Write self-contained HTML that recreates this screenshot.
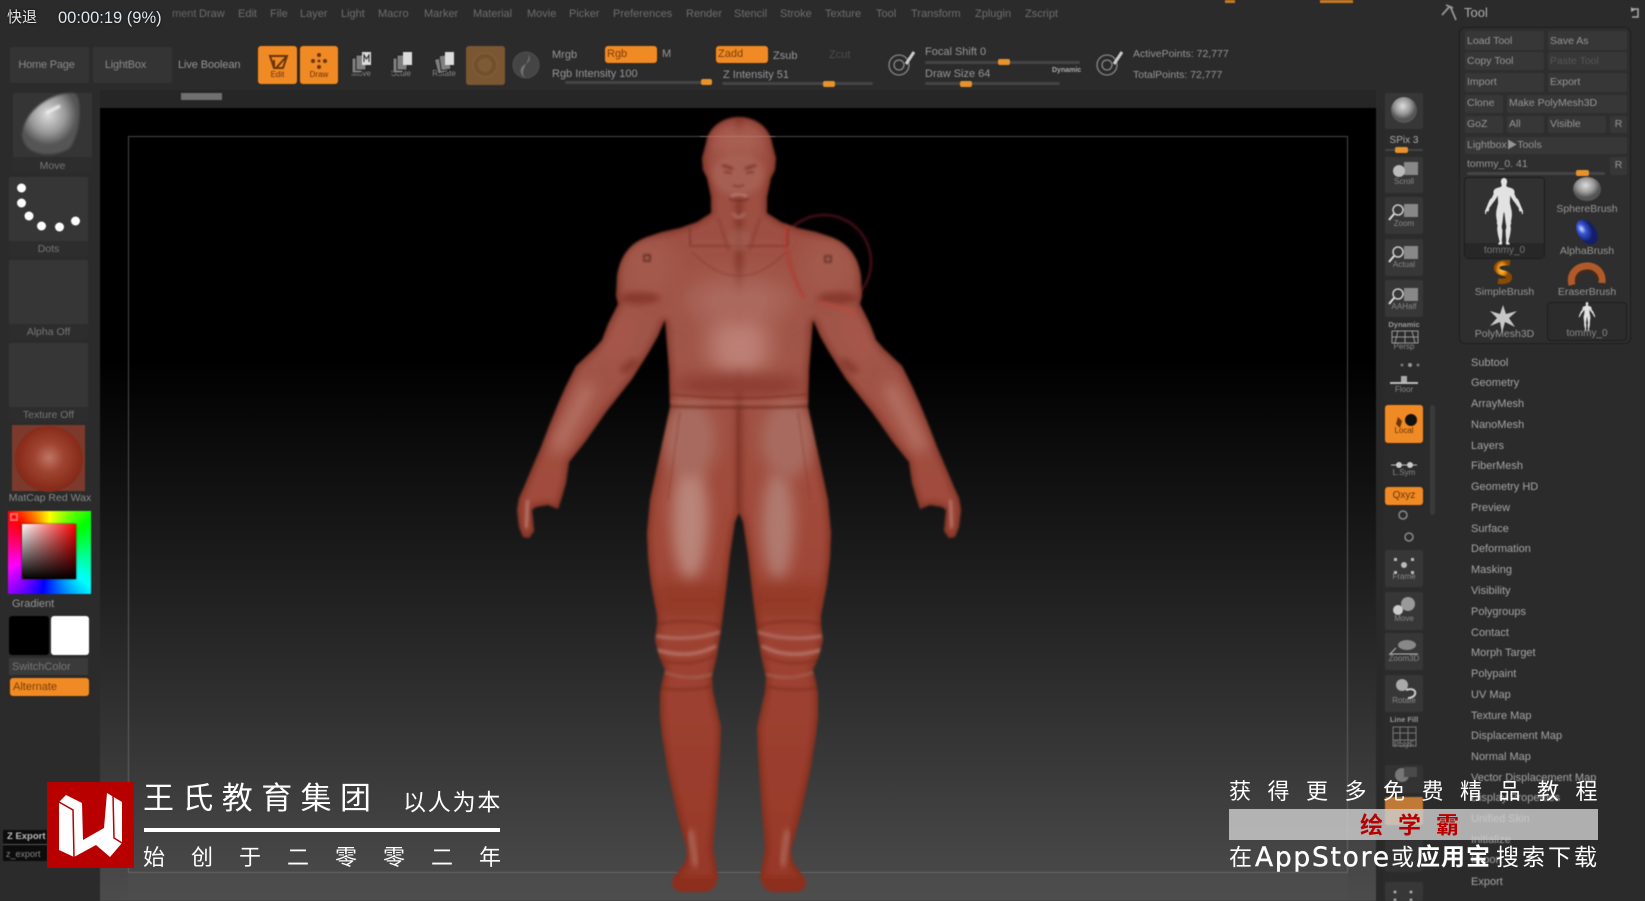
<!DOCTYPE html>
<html lang="zh"><head><meta charset="utf-8"><title>ZBrush</title>
<style>
html,body{margin:0;padding:0;background:#2a2a2a;width:1645px;height:901px;overflow:hidden}
body{position:relative;font-family:"Liberation Sans","Noto Sans CJK SC",sans-serif}
#app{position:absolute;left:0;top:0;width:1645px;height:901px;background:#2b2b2b;filter:blur(.65px);overflow:hidden}
.b{position:absolute;background:#373737;border-radius:2px}
.o{position:absolute;background:#f08a24;border-radius:3px;box-shadow:0 0 2px #4a2a0a}
.t{position:absolute;white-space:nowrap;font-size:11px;line-height:14px;height:14px;margin-top:-7px;color:#969696}
.c{text-align:center}
.s{position:absolute;height:3px;background:#444;border-radius:2px}
.h{position:absolute;height:6px;background:#e8922c;border-radius:2px}
.x{position:absolute;white-space:nowrap;line-height:1;color:#fff}
</style></head><body>
<div id="app">
<!-- canvas -->
<div style="position:absolute;left:100px;top:90px;width:1276px;height:18px;background:#262626"></div>
<div style="position:absolute;left:100px;top:108px;width:1276px;height:793px;background:linear-gradient(#000 0,#000 250px,#131313 390px,#4c4c4c 793px)"></div>
<div style="position:absolute;left:1376px;top:108px;width:8px;height:793px;background:#292929"></div>
<div style="position:absolute;left:128px;top:136px;width:1220px;height:737px;border:1px solid rgba(130,130,130,.55);box-sizing:border-box"></div>
<div style="position:absolute;left:128px;top:874px;width:1220px;height:27px;background:rgba(80,80,80,.45)"></div>
<div style="position:absolute;left:181px;top:93px;width:41px;height:7px;background:#707070"></div>

<!-- menu -->
<span class="t" style="left:172px;top:14px;color:#666">ment</span>
<span class="t" style="left:199px;top:14px;color:#6e6e6e">Draw</span><span class="t" style="left:238px;top:14px;color:#6e6e6e">Edit</span><span class="t" style="left:270px;top:14px;color:#6e6e6e">File</span><span class="t" style="left:300px;top:14px;color:#6e6e6e">Layer</span><span class="t" style="left:341px;top:14px;color:#6e6e6e">Light</span><span class="t" style="left:378px;top:14px;color:#6e6e6e">Macro</span><span class="t" style="left:424px;top:14px;color:#6e6e6e">Marker</span><span class="t" style="left:473px;top:14px;color:#6e6e6e">Material</span><span class="t" style="left:527px;top:14px;color:#6e6e6e">Movie</span><span class="t" style="left:569px;top:14px;color:#6e6e6e">Picker</span><span class="t" style="left:613px;top:14px;color:#6e6e6e">Preferences</span><span class="t" style="left:686px;top:14px;color:#6e6e6e">Render</span><span class="t" style="left:734px;top:14px;color:#6e6e6e">Stencil</span><span class="t" style="left:780px;top:14px;color:#6e6e6e">Stroke</span><span class="t" style="left:825px;top:14px;color:#6e6e6e">Texture</span><span class="t" style="left:876px;top:14px;color:#6e6e6e">Tool</span><span class="t" style="left:911px;top:14px;color:#6e6e6e">Transform</span><span class="t" style="left:975px;top:14px;color:#6e6e6e">Zplugin</span><span class="t" style="left:1025px;top:14px;color:#6e6e6e">Zscript</span>
<div style="position:absolute;left:1225px;top:0;width:10px;height:3px;background:#c97a20"></div>
<div style="position:absolute;left:1320px;top:0;width:33px;height:3px;background:#c97a20"></div>

<!-- toolbar -->
<div class="b" style="left:10px;top:47px;width:79px;height:36px;background:#343434"></div><span class="t c" style="left:7px;top:65px;width:79px;letter-spacing:-.2px;color:#8a8a8a">Home Page</span>
<div class="b" style="left:93px;top:47px;width:79px;height:36px;background:#343434"></div><span class="t c" style="left:86px;top:65px;width:79px;letter-spacing:-.2px;color:#8a8a8a">LightBox</span>
<span class="t" style="left:178px;top:65px;letter-spacing:-.1px">Live Boolean</span>
<div class="o" style="left:258px;top:46px;width:39px;height:38px"></div><span class="t c" style="left:258px;top:75px;width:39px;font-size:8px;color:#6a3508">Edit</span>
<div class="o" style="left:300px;top:46px;width:38px;height:38px"></div><span class="t c" style="left:300px;top:75px;width:38px;font-size:8px;color:#6a3508">Draw</span>
<span class="t c" style="left:348px;top:74px;width:26px;font-size:8px;color:#888">Move</span>
<span class="t c" style="left:388px;top:74px;width:26px;font-size:8px;color:#888">Scale</span>
<span class="t c" style="left:430px;top:74px;width:28px;font-size:8px;color:#888">Rotate</span>
<div style="position:absolute;left:466px;top:46px;width:39px;height:39px;background:#7a5632;border-radius:3px"></div>
<span class="t" style="left:552px;top:55px">Mrgb</span>
<div class="o" style="left:605px;top:46px;width:52px;height:17px"></div><span class="t" style="left:607px;top:54px;color:#7a3f08">Rgb</span>
<span class="t" style="left:662px;top:54px">M</span>
<span class="t" style="left:552px;top:74px">Rgb Intensity 100</span>
<div class="s" style="left:565px;top:81px;width:147px"></div><div class="h" style="left:701px;top:79px;width:11px"></div>
<div class="o" style="left:716px;top:46px;width:52px;height:17px"></div><span class="t" style="left:718px;top:54px;color:#7a3f08">Zadd</span>
<span class="t" style="left:773px;top:56px">Zsub</span>
<span class="t" style="left:829px;top:55px;color:#4d4d4d">Zcut</span>
<span class="t" style="left:723px;top:75px">Z Intensity 51</span>
<div class="s" style="left:722px;top:82px;width:151px"></div><div class="h" style="left:823px;top:81px;width:12px"></div>
<span class="t" style="left:925px;top:52px">Focal Shift 0</span>
<div class="s" style="left:925px;top:61px;width:155px"></div><div class="h" style="left:998px;top:59px;width:12px"></div>
<span class="t" style="left:925px;top:74px">Draw Size 64</span>
<div class="s" style="left:925px;top:82px;width:135px"></div><div class="h" style="left:960px;top:81px;width:12px"></div>
<span class="t" style="left:1052px;top:71px;font-size:7px;font-weight:bold;color:#aaa">Dynamic</span>
<span class="t" style="left:1133px;top:54px;font-size:10.5px">ActivePoints: 72,777</span>
<span class="t" style="left:1133px;top:75px;font-size:10.5px">TotalPoints: 72,777</span>

<!-- Tool header -->
<span class="t" style="left:1464px;top:13px;font-size:13px;color:#b0b0b0">Tool</span>
<!-- tool panel -->
<div style="position:absolute;left:1459px;top:27px;width:172px;height:317px;background:#2e2e2e;border:1px solid #1f1f1f;border-radius:6px;box-sizing:border-box"></div>
<div class="b" style="left:1465px;top:31px;width:79px;height:19px"></div><span class="t" style="left:1467px;top:41px;font-size:10.5px">Load Tool</span>
<div class="b" style="left:1548px;top:31px;width:79px;height:19px"></div><span class="t" style="left:1550px;top:41px;font-size:10.5px">Save As</span>
<div class="b" style="left:1465px;top:52px;width:79px;height:18px"></div><span class="t" style="left:1467px;top:61px;font-size:10.5px">Copy Tool</span>
<div class="b" style="left:1548px;top:52px;width:79px;height:18px"></div><span class="t" style="left:1550px;top:61px;font-size:10.5px;color:#555">Paste Tool</span>
<div class="b" style="left:1465px;top:73px;width:79px;height:19px"></div><span class="t" style="left:1467px;top:82px;font-size:10.5px">Import</span>
<div class="b" style="left:1548px;top:73px;width:79px;height:19px"></div><span class="t" style="left:1550px;top:82px;font-size:10.5px">Export</span>
<div class="b" style="left:1465px;top:95px;width:38px;height:18px"></div><span class="t" style="left:1467px;top:103px;font-size:10.5px">Clone</span>
<div class="b" style="left:1507px;top:95px;width:120px;height:18px"></div><span class="t" style="left:1509px;top:103px;font-size:10.5px">Make PolyMesh3D</span>
<div class="b" style="left:1465px;top:116px;width:38px;height:17px"></div><span class="t" style="left:1467px;top:124px;font-size:10.5px">GoZ</span>
<div class="b" style="left:1507px;top:116px;width:37px;height:17px"></div><span class="t" style="left:1509px;top:124px;font-size:10.5px">All</span>
<div class="b" style="left:1548px;top:116px;width:58px;height:17px"></div><span class="t" style="left:1550px;top:124px;font-size:10.5px">Visible</span>
<div class="b" style="left:1610px;top:116px;width:17px;height:17px"></div><span class="t c" style="left:1610px;top:124px;width:17px;font-size:10.5px">R</span>
<div class="b" style="left:1465px;top:137px;width:162px;height:17px"></div><span class="t" style="left:1467px;top:145px;font-size:10.5px">Lightbox▶Tools</span>
<span class="t" style="left:1467px;top:164px;font-size:10.5px">tommy_0. 41</span>
<div class="s" style="left:1467px;top:172px;width:138px"></div><div class="h" style="left:1576px;top:170px;width:13px"></div>
<div class="b" style="left:1610px;top:157px;width:17px;height:18px"></div><span class="t c" style="left:1610px;top:165px;width:17px;font-size:10.5px">R</span>
<div style="position:absolute;left:1464px;top:177px;width:81px;height:82px;background:#313131;border:1px solid #1d1d1d;border-radius:4px;box-sizing:border-box"></div>
<div style="position:absolute;left:1465px;top:243px;width:79px;height:15px;background:#272727"></div>
<span class="t c" style="left:1464px;top:251px;width:81px;font-size:10px;color:#777">tommy_0</span>
<span class="t c" style="left:1546px;top:209px;width:82px;font-size:10.5px">SphereBrush</span>
<span class="t c" style="left:1546px;top:251px;width:82px;font-size:10.5px">AlphaBrush</span>
<span class="t c" style="left:1464px;top:292px;width:81px;font-size:10.5px">SimpleBrush</span>
<span class="t c" style="left:1546px;top:292px;width:82px;font-size:10.5px">EraserBrush</span>
<span class="t c" style="left:1464px;top:334px;width:81px;font-size:10.5px">PolyMesh3D</span>
<div style="position:absolute;left:1547px;top:302px;width:80px;height:39px;background:#2c2c2c;border:1px solid #1d1d1d;border-radius:4px;box-sizing:border-box"></div>
<span class="t c" style="left:1547px;top:334px;width:80px;font-size:10px;color:#888">tommy_0</span>

<!-- sub palettes -->
<span class="t" style="left:1471px;top:363px;color:#a5a5a5">Subtool</span><span class="t" style="left:1471px;top:383px;color:#a5a5a5">Geometry</span><span class="t" style="left:1471px;top:404px;color:#a5a5a5">ArrayMesh</span><span class="t" style="left:1471px;top:425px;color:#a5a5a5">NanoMesh</span><span class="t" style="left:1471px;top:446px;color:#a5a5a5">Layers</span><span class="t" style="left:1471px;top:466px;color:#a5a5a5">FiberMesh</span><span class="t" style="left:1471px;top:487px;color:#a5a5a5">Geometry HD</span><span class="t" style="left:1471px;top:508px;color:#a5a5a5">Preview</span><span class="t" style="left:1471px;top:529px;color:#a5a5a5">Surface</span><span class="t" style="left:1471px;top:549px;color:#a5a5a5">Deformation</span><span class="t" style="left:1471px;top:570px;color:#a5a5a5">Masking</span><span class="t" style="left:1471px;top:591px;color:#a5a5a5">Visibility</span><span class="t" style="left:1471px;top:612px;color:#a5a5a5">Polygroups</span><span class="t" style="left:1471px;top:633px;color:#a5a5a5">Contact</span><span class="t" style="left:1471px;top:653px;color:#a5a5a5">Morph Target</span><span class="t" style="left:1471px;top:674px;color:#a5a5a5">Polypaint</span><span class="t" style="left:1471px;top:695px;color:#a5a5a5">UV Map</span><span class="t" style="left:1471px;top:716px;color:#a5a5a5">Texture Map</span><span class="t" style="left:1471px;top:736px;color:#a5a5a5">Displacement Map</span><span class="t" style="left:1471px;top:757px;color:#a5a5a5">Normal Map</span><span class="t" style="left:1471px;top:778px;color:#a5a5a5">Vector Displacement Map</span><span class="t" style="left:1471px;top:798px;color:#a5a5a5">Display Properties</span><span class="t" style="left:1471px;top:819px;color:#a5a5a5">Unified Skin</span><span class="t" style="left:1471px;top:840px;color:#a5a5a5">Initialize</span><span class="t" style="left:1471px;top:860px;color:#a5a5a5">Import</span><span class="t" style="left:1471px;top:882px;color:#a5a5a5">Export</span>

<!-- right shelf -->
<div class="b" style="left:1385px;top:93px;width:38px;height:36px"></div>
<span class="t c" style="left:1385px;top:141px;width:38px;font-size:10px;color:#aaa">SPix 3</span>
<div class="s" style="left:1385px;top:149px;width:38px;height:2px"></div><div class="h" style="left:1395px;top:147px;width:13px"></div>
<div class="b" style="left:1385px;top:157px;width:38px;height:36px"></div><span class="t c" style="left:1385px;top:182px;width:38px;font-size:8px;color:#888">Scroll</span>
<div class="b" style="left:1385px;top:197px;width:38px;height:37px"></div><span class="t c" style="left:1385px;top:224px;width:38px;font-size:8px;color:#888">Zoom</span>
<div class="b" style="left:1385px;top:239px;width:38px;height:37px"></div><span class="t c" style="left:1385px;top:265px;width:38px;font-size:8px;color:#888">Actual</span>
<div class="b" style="left:1385px;top:280px;width:38px;height:37px"></div><span class="t c" style="left:1385px;top:307px;width:38px;font-size:8px;color:#888">AAHalf</span>
<span class="t c" style="left:1385px;top:325px;width:38px;font-size:7.5px;font-weight:bold;color:#999">Dynamic</span>
<span class="t c" style="left:1385px;top:347px;width:38px;font-size:8px;color:#888">Persp</span>
<span class="t c" style="left:1385px;top:390px;width:38px;font-size:8px;color:#888">Floor</span>
<div class="o" style="left:1385px;top:405px;width:38px;height:38px"></div><span class="t c" style="left:1385px;top:431px;width:38px;font-size:8px;color:#6a3508">Local</span>
<span class="t c" style="left:1385px;top:473px;width:38px;font-size:8px;color:#888">L.Sym</span>
<div class="o" style="left:1385px;top:487px;width:38px;height:18px"></div><span class="t c" style="left:1385px;top:496px;width:38px;font-size:10px;color:#6a3508">Qxyz</span>
<div class="b" style="left:1385px;top:550px;width:38px;height:37px"></div><span class="t c" style="left:1385px;top:577px;width:38px;font-size:8px;color:#888">Frame</span>
<div class="b" style="left:1385px;top:592px;width:38px;height:38px"></div><span class="t c" style="left:1385px;top:619px;width:38px;font-size:8px;color:#888">Move</span>
<div class="b" style="left:1385px;top:633px;width:38px;height:37px"></div><span class="t c" style="left:1385px;top:659px;width:38px;font-size:8px;color:#888">Zoom3D</span>
<div class="b" style="left:1385px;top:675px;width:38px;height:37px"></div><span class="t c" style="left:1385px;top:701px;width:38px;font-size:8px;color:#888">Rotate</span>
<span class="t c" style="left:1385px;top:720px;width:38px;font-size:7.5px;font-weight:bold;color:#999">Line Fill</span>
<span class="t c" style="left:1385px;top:745px;width:38px;font-size:8px;color:#888">PolyF</span>
<div class="b" style="left:1385px;top:765px;width:38px;height:28px;background:#333"></div>
<div style="position:absolute;left:1385px;top:797px;width:38px;height:28px;background:#c07a35;border-radius:2px"></div>
<div class="b" style="left:1385px;top:840px;width:38px;height:32px;background:#333"></div>
<div class="b" style="left:1385px;top:882px;width:38px;height:19px"></div>
<div style="position:absolute;left:1430px;top:405px;width:5px;height:110px;background:#3a3a3a;border-radius:3px"></div>

<!-- left panel -->
<div class="b" style="left:13px;top:93px;width:79px;height:80px;background:#353535"></div>
<div style="position:absolute;left:13px;top:157px;width:79px;height:16px;background:#2d2d2d"></div><span class="t c" style="left:13px;top:166px;width:79px;font-size:10.5px;color:#777">Move</span>
<div class="b" style="left:9px;top:177px;width:79px;height:80px;background:#363636"></div>
<div style="position:absolute;left:9px;top:241px;width:79px;height:16px;background:#2d2d2d"></div><span class="t c" style="left:9px;top:249px;width:79px;font-size:10.5px;color:#777">Dots</span>
<div class="b" style="left:9px;top:260px;width:79px;height:79px;background:#363636"></div>
<div style="position:absolute;left:9px;top:324px;width:79px;height:15px;background:#2d2d2d"></div><span class="t c" style="left:9px;top:332px;width:79px;font-size:10.5px;color:#777">Alpha Off</span>
<div class="b" style="left:9px;top:343px;width:79px;height:79px;background:#363636"></div>
<div style="position:absolute;left:9px;top:407px;width:79px;height:15px;background:#2d2d2d"></div><span class="t c" style="left:9px;top:415px;width:79px;font-size:10.5px;color:#777">Texture Off</span>
<div style="position:absolute;left:12px;top:425px;width:73px;height:66px;background:#7c3a2c"></div>
<div style="position:absolute;left:15px;top:426px;width:68px;height:66px;border-radius:50%;background:radial-gradient(circle at 50% 48%,#c07565 0,#a04432 30%,#8a2d1c 62%,#6a2216 100%)"></div>
<span class="t c" style="left:8px;top:498px;width:84px;font-size:10.5px;color:#888">MatCap Red Wax</span>
<!-- colour picker -->
<div style="position:absolute;left:8px;top:511px;width:83px;height:83px;background:conic-gradient(from 0deg at 50% 50%,#ff0 0deg,#0f0 50deg,#0ff 130deg,#00f 190deg,#f0f 250deg,#f00 315deg,#ff0 360deg)"></div>
<div style="position:absolute;left:22px;top:524px;width:54px;height:55px;background:linear-gradient(to bottom,rgba(0,0,0,0),#000),linear-gradient(to right,#fff,#f00);box-shadow:0 0 2px #222"></div>
<div style="position:absolute;left:10px;top:513px;width:8px;height:8px;border:2px solid #f66;box-sizing:border-box"></div>
<span class="t" style="left:12px;top:604px;font-size:11px">Gradient</span>
<div style="position:absolute;left:9px;top:616px;width:40px;height:39px;background:#000;border-radius:3px"></div>
<div style="position:absolute;left:51px;top:616px;width:38px;height:39px;background:#fff;border-radius:3px"></div>
<div style="position:absolute;left:9px;top:658px;width:79px;height:17px;background:#3a3a3a"></div><span class="t" style="left:12px;top:667px;font-size:11px;color:#777">SwitchColor</span>
<div class="o" style="left:10px;top:678px;width:79px;height:18px"></div><span class="t" style="left:13px;top:687px;color:#7a3f08">Alternate</span>
<div style="position:absolute;left:3px;top:830px;width:44px;height:31px;background:#0c0c0c"></div>
<span class="t" style="left:7px;top:837px;font-size:9.5px;font-weight:bold;color:#bbb">Z Export</span>
<div style="position:absolute;left:3px;top:844px;width:44px;height:1px;background:#555"></div>
<span class="t" style="left:6px;top:854px;font-size:9px;color:#888">z_export</span>

<svg width="1645" height="901" viewBox="0 0 1645 901" style="position:absolute;left:0;top:0">
<defs>
<filter id="b1" x="-30%" y="-30%" width="160%" height="160%"><feGaussianBlur stdDeviation="1"/></filter>
<filter id="b3" x="-30%" y="-30%" width="160%" height="160%"><feGaussianBlur stdDeviation="3"/></filter>
<filter id="b7" x="-50%" y="-50%" width="200%" height="200%"><feGaussianBlur stdDeviation="7"/></filter>
<filter id="b12" x="-60%" y="-60%" width="220%" height="220%"><feGaussianBlur stdDeviation="12"/></filter>
<linearGradient id="bodyg" x1="0" y1="117" x2="0" y2="892" gradientUnits="userSpaceOnUse"><stop offset="0" stop-color="#9c4c40"/><stop offset=".3" stop-color="#a05548"/><stop offset=".55" stop-color="#a04838"/><stop offset="1" stop-color="#983828"/></linearGradient>
<radialGradient id="sph" cx="45%" cy="35%"><stop offset="0" stop-color="#ddd"/><stop offset=".6" stop-color="#999"/><stop offset="1" stop-color="#555"/></radialGradient>
<radialGradient id="blu" cx="35%" cy="30%"><stop offset="0" stop-color="#cfe0ff"/><stop offset=".4" stop-color="#3a56d8"/><stop offset="1" stop-color="#141f6a"/></radialGradient>
<radialGradient id="gld" cx="40%" cy="35%"><stop offset="0" stop-color="#ffd060"/><stop offset=".6" stop-color="#e88a10"/><stop offset="1" stop-color="#8a4a06"/></radialGradient>
<path id="half" d="M739 117 C722 117 708 128 706 143 L702 158 L703 170 L707 178 L711 197 L711 213 L697 222 L680 228 L662 232 L647 237 C630 243 620 256 617 276 L616 296 L618 304 L608 324 L602 340 L594 349 L576 366 L566 386 L558 404 L549 426 L541 447 L532 468 L524 487 L519 498 L517 510 L519 527 L523 537 L529 538 L534 531 L533 520 L532 510 L536 507 L548 505 L553 507 L558 509 L561 500 L566 483 L569 462 L585 442 L606 412 L632 379 L649 352 L658 336 L665 320 L667 345 L669 370 L670 407 L664 435 L657 467 L650 500 L647 533 L648 558 L651 584 L657 615 L657 625 L655 640 L659 656 L665 670 L662 682 L660 695 L660 716 L662 735 L668 772 L677 813 L683 836 L687 850 L685 862 L672 880 L673 888 L681 892 L706 892 L714 888 L718 878 L716 864 L713 848 L717 800 L720 752 L721 727 L716 705 L713 692 L712 677 L717 655 L721 630 L726 590 L730 555 L735 522 L739 513 Z"/>
<clipPath id="fig"><use href="#half"/><use href="#half" transform="matrix(-1 0 0 1 1478 0)"/></clipPath>
</defs>

<!-- brush circle -->
<circle cx="824" cy="262" r="47" fill="none" stroke="#3d0a12" stroke-width="3" filter="url(#b1)"/>

<!-- figure -->
<g filter="url(#b1)">
<g clip-path="url(#fig)">
<rect x="500" y="110" width="480" height="790" fill="url(#bodyg)"/>
<!-- edge darkening -->
<g fill="none" stroke="#6a2216" stroke-width="6" opacity=".6" filter="url(#b3)"><use href="#half"/><use href="#half" transform="matrix(-1 0 0 1 1478 0)"/></g>
<!-- broad highlights -->
<ellipse cx="739" cy="345" rx="30" ry="38" fill="#bd8076" filter="url(#b12)"/>
<ellipse cx="739" cy="300" rx="55" ry="22" fill="#ac695d" filter="url(#b12)"/>
<ellipse cx="739" cy="385" rx="66" ry="12" fill="#8e3e32" filter="url(#b7)"/>
<!-- shoulders -->
<ellipse cx="650" cy="268" rx="26" ry="28" fill="#a35a4c" filter="url(#b7)"/><ellipse cx="828" cy="268" rx="26" ry="28" fill="#a35a4c" filter="url(#b7)"/>
<ellipse cx="640" cy="298" rx="20" ry="6" fill="#7e2e22" opacity=".7" filter="url(#b3)"/><ellipse cx="838" cy="298" rx="20" ry="6" fill="#7e2e22" opacity=".7" filter="url(#b3)"/>
<!-- arms -->
<path d="M632 320 L610 355" stroke="#a8594c" stroke-width="14" filter="url(#b7)"/><path d="M846 320 L868 355" stroke="#a8594c" stroke-width="14" filter="url(#b7)"/>
<path d="M636 360 L622 372" stroke="#7a2c20" stroke-width="8" opacity=".6" filter="url(#b3)"/><path d="M842 360 L856 372" stroke="#7a2c20" stroke-width="8" opacity=".6" filter="url(#b3)"/>
<path d="M590 385 L556 450" stroke="#b8786c" stroke-width="12" filter="url(#b7)"/><path d="M888 385 L922 450" stroke="#b8786c" stroke-width="12" filter="url(#b7)"/>
<path d="M528 500 L526 528" stroke="#b97a6e" stroke-width="3" filter="url(#b1)"/><path d="M950 500 L952 528" stroke="#b97a6e" stroke-width="3" filter="url(#b1)"/>
<!-- thighs -->
<ellipse cx="690" cy="520" rx="18" ry="60" fill="#b98479" filter="url(#b7)"/><ellipse cx="778" cy="525" rx="16" ry="55" fill="#b07a70" filter="url(#b7)"/>
<ellipse cx="690" cy="440" rx="26" ry="38" fill="#a86a5e" filter="url(#b7)"/><ellipse cx="787" cy="440" rx="26" ry="38" fill="#a86a5e" filter="url(#b7)"/>
<rect x="655" y="585" width="170" height="30" fill="#8e3424" filter="url(#b7)" opacity=".7"/>
<!-- knees -->
<g filter="url(#b1)" fill="none">
<path d="M656 624 Q690 618 722 626" stroke="#7a2a1c" stroke-width="2" opacity=".7"/><path d="M656 636 Q690 642 720 632" stroke="#b4766a" stroke-width="2.500"/><path d="M657 650 Q690 660 716 646" stroke="#bb7e72" stroke-width="2.500"/><path d="M660 660 Q690 668 714 656" stroke="#7a2a1c" stroke-width="2" opacity=".7"/><path d="M664 672 Q690 682 712 674" stroke="#a86454" stroke-width="2"/><path d="M662 688 Q690 692 712 686" stroke="#7a2a1c" stroke-width="1.500"/>
<path d="M822 624 Q788 618 756 626" stroke="#7a2a1c" stroke-width="2" opacity=".7"/><path d="M822 636 Q788 642 758 632" stroke="#b4766a" stroke-width="2.500"/><path d="M821 650 Q788 660 762 646" stroke="#bb7e72" stroke-width="2.500"/><path d="M818 660 Q788 668 764 656" stroke="#7a2a1c" stroke-width="2" opacity=".7"/><path d="M814 672 Q788 682 766 674" stroke="#a86454" stroke-width="2"/><path d="M816 688 Q788 692 766 686" stroke="#7a2a1c" stroke-width="1.500"/>
</g>
<!-- calves / ankles -->
<path d="M690 830 L696 866" stroke="#b87c6c" stroke-width="4" filter="url(#b3)"/><path d="M788 830 L782 866" stroke="#b87c6c" stroke-width="4" filter="url(#b3)"/>
<rect x="672" y="876" width="46" height="16" fill="#8e2e1e" filter="url(#b3)"/><rect x="760" y="876" width="46" height="16" fill="#8e2e1e" filter="url(#b3)"/>
<!-- waist fold -->
<path d="M668 394 Q739 402 810 394" stroke="#80301f" stroke-width="1.500" fill="none"/>
<path d="M668 406 Q739 410 810 406" stroke="#6a281c" stroke-width="2" fill="none" filter="url(#b1)"/>
<path d="M668 401 Q739 405 810 401" stroke="#a86658" stroke-width="1.500" fill="none" filter="url(#b1)"/>
<path d="M738 410 L738 510" stroke="#7a2e22" stroke-width="1"/>
<path d="M680 412 L668 500 M798 412 L810 500" stroke="#86382a" stroke-width="1" fill="none" opacity=".7"/>
<path d="M739 515 L739 590" stroke="#5a1c12" stroke-width="4" filter="url(#b1)"/>
<!-- neck & collar -->
<path d="M690 246 L788 246" stroke="#7e3024" stroke-width="1.500" fill="none" opacity=".8"/>
<path d="M690 228 L690 246 M788 228 L788 246" stroke="#7e3024" stroke-width="1.500"/>
<path d="M692 252 Q739 300 786 252" stroke="#85372a" stroke-width="1" fill="none" opacity=".8"/>
<path d="M718 218 L729 250 M760 218 L749 250" stroke="#7d372b" stroke-width="2" opacity=".6" filter="url(#b1)"/>
<ellipse cx="739" cy="240" rx="10" ry="12" fill="#a86a5f" opacity=".5" filter="url(#b3)"/>
<path d="M787 225 Q782 258 804 297" stroke="#b03a30" stroke-width="2.500" fill="none" filter="url(#b1)"/>
<path d="M820 303 Q840 305 856 315" stroke="#c24a3c" stroke-width="2" fill="none" filter="url(#b1)"/>
<!-- head -->
<ellipse cx="738" cy="142" rx="26" ry="16" fill="#a95f52" filter="url(#b7)"/>
<ellipse cx="738" cy="174" rx="26" ry="22" fill="#a65e52" filter="url(#b3)"/>
<path d="M722 165 L733 169 M756 165 L745 169" stroke="#6e261c" stroke-width="2" filter="url(#b1)"/>
<path d="M724 172 L732 173 M754 172 L746 173" stroke="#84392c" stroke-width="2"/>
<path d="M738 170 L738 181" stroke="#bd8276" stroke-width="4" filter="url(#b1)"/>
<path d="M733 185 Q738 188 744 185" stroke="#7a3024" stroke-width="1.500" fill="none"/>
<path d="M731 196 Q738 193 747 196" stroke="#b97c70" stroke-width="2" fill="none"/>
<path d="M729 199 Q738 202 749 199" stroke="#732c20" stroke-width="1.500" fill="none"/>
<path d="M733 213 Q738 222 745 213" stroke="#ad6c60" stroke-width="3" fill="none" filter="url(#b1)"/>
<rect x="644" y="255" width="6" height="6" fill="none" stroke="#4a0f10" stroke-width="1.500"/>
<rect x="825" y="256" width="6" height="6" fill="none" stroke="#46201a" stroke-width="1.500"/>
</g>
</g>

<!-- inner frame over head -->
<line x1="700" y1="136.500" x2="775" y2="136.500" stroke="#c58f84" stroke-width="1" opacity=".5"/>

<!-- Move brush sphere -->
<path d="M22 135 C24 110 52 92 74 93 C82 96 82 130 70 148 C56 158 24 158 22 135Z" fill="url(#sph)" filter="url(#b1)"/>
<path d="M46 113 L60 106" stroke="#eee" stroke-width="3" filter="url(#b1)"/>
<!-- dots -->
<g fill="#fff"><circle cx="21.500" cy="188" r="4.500"/><circle cx="21.500" cy="203" r="4.500"/><circle cx="29" cy="216" r="4.500"/><circle cx="41.500" cy="226" r="4.500"/><circle cx="59.500" cy="227" r="4.500"/><circle cx="75.500" cy="221" r="4.500"/></g>

<!-- toolbar icons -->
<path d="M270 56 H287 L283 68 H274Z M274 68 V60 M287 56 L276 68" stroke="#6a3508" stroke-width="2" fill="none"/>
<g fill="#6a3508"><circle cx="319" cy="55" r="2"/><circle cx="319" cy="67" r="2"/><circle cx="313" cy="61" r="2"/><circle cx="325" cy="61" r="2"/><circle cx="319" cy="61" r="1.500"/></g>
<g fill="#7f7f7f" stroke="#222" stroke-width="1"><rect x="352" y="58" width="10" height="15"/><rect x="356" y="55" width="10" height="15"/></g><rect x="362" y="52" width="9" height="13" fill="#ddd"/><path d="M364 62V55L366.500 59 369 55V62" stroke="#222" fill="none"/>
<g fill="#7f7f7f" stroke="#222" stroke-width="1"><rect x="393" y="58" width="10" height="15"/><rect x="397" y="55" width="10" height="15"/></g><rect x="403" y="52" width="9" height="13" fill="#ddd"/>
<g fill="#7f7f7f" stroke="#222" stroke-width="1"><rect x="436" y="58" width="10" height="15" transform="rotate(-15 441 65)"/><rect x="440" y="55" width="10" height="15" transform="rotate(-8 445 62)"/></g><rect x="445" y="52" width="9" height="13" fill="#ddd"/>
<circle cx="485" cy="65" r="12" fill="#70502e" stroke="#7f5b35" stroke-width="2"/><circle cx="485" cy="65" r="7" fill="#7f5b35"/>
<circle cx="526" cy="65" r="13" fill="#454545" stroke="#4f4f4f"/><path d="M526 52 C536 58 516 70 526 78 C518 74 520 66 526 64 C532 60 530 55 526 52Z" fill="#777"/>
<g fill="none" stroke="#888" stroke-width="1.300"><circle cx="899" cy="65" r="10"/><circle cx="899" cy="65" r="5"/></g><path d="M906 64 L914 52" stroke="#ccc" stroke-width="3"/>
<g fill="none" stroke="#888" stroke-width="1.300"><circle cx="1107" cy="65" r="10"/><circle cx="1107" cy="65" r="5"/></g><path d="M1114 64 L1122 52" stroke="#ccc" stroke-width="3"/>
<!-- tool header icons -->
<path d="M1442 15 L1450 6 M1450 6 L1456 20 M1446 5 L1453 8" stroke="#999" stroke-width="1.700" fill="none"/>
<path d="M1632 9 H1638 V17 H1632" stroke="#aaa" stroke-width="1.500" fill="none"/><path d="M1631 7 L1635 10 L1631 12Z" fill="#aaa"/>

<!-- brush icons -->
<ellipse cx="1587" cy="189" rx="14" ry="12" fill="url(#sph)"/>
<ellipse cx="1587" cy="232" rx="9" ry="14" fill="url(#blu)" transform="rotate(-35 1587 232)"/>
<path d="M1510 263 C1494 261 1493 271 1503 273 C1513 275 1511 283 1498 281" fill="none" stroke="url(#gld)" stroke-width="5.500"/>
<path d="M1572 285 C1566 262 1604 258 1602 283" fill="none" stroke="#b05a2a" stroke-width="7"/>
<path d="M1576 284 C1574 268 1598 266 1598 281" fill="none" stroke="#4a2a18" stroke-width="2"/>
<path d="M1503 305 L1506 314 L1517 311 L1509 318 L1515 327 L1505 322 L1502 333 L1500 322 L1490 326 L1497 318 L1490 311 L1500 314Z" fill="#c8c8c8"/>
<!-- mini figures -->
<g fill="#e2e2e2">
<g transform="translate(1504 178) scale(.086) translate(-739 -117)"><use href="#half"/><use href="#half" transform="matrix(-1 0 0 1 1478 0)"/></g>
<g transform="translate(1587 302) scale(.037) translate(-739 -117)"><use href="#half"/><use href="#half" transform="matrix(-1 0 0 1 1478 0)"/></g>
</g>

<!-- shelf icons -->
<circle cx="1404" cy="110" r="13" fill="url(#sph)"/>
<g fill="#bbb">
<rect x="1404" y="162" width="14" height="13" fill="#888"/><circle cx="1399" cy="171" r="6"/>
<rect x="1404" y="204" width="14" height="13" fill="#888"/><circle cx="1398" cy="210" r="5" fill="none" stroke="#ccc" stroke-width="1.500"/><path d="M1394 214 L1389 220" stroke="#ddd" stroke-width="2"/>
<rect x="1404" y="246" width="14" height="13" fill="#888"/><circle cx="1398" cy="252" r="5" fill="none" stroke="#ccc" stroke-width="1.500"/><path d="M1394 256 L1389 262" stroke="#ddd" stroke-width="2"/>
<rect x="1404" y="288" width="14" height="13" fill="#888"/><circle cx="1398" cy="294" r="5" fill="none" stroke="#ccc" stroke-width="1.500"/><path d="M1394 298 L1389 304" stroke="#ddd" stroke-width="2"/>
</g>
<g stroke="#999" fill="none"><path d="M1392 331 H1418 V343 H1392Z M1392 337 H1418 M1405 331 V343 M1398 331 L1395 343 M1412 331 L1415 343"/></g>
<rect x="1390" y="382" width="28" height="2" fill="#bbb"/><rect x="1401" y="376" width="6" height="6" fill="#aaa"/><g fill="#777"><circle cx="1402" cy="365" r="1.500"/><circle cx="1410" cy="365" r="2" fill="#999"/><circle cx="1418" cy="365" r="1.500"/></g>
<circle cx="1411" cy="420" r="6" fill="#111"/><path d="M1398 417 L1396 424 L1400 428 L1402 421Z" fill="#6a3508"/>
<path d="M1391 465 H1417" stroke="#bbb"/><circle cx="1399" cy="465" r="3" fill="#ccc"/><circle cx="1410" cy="465" r="3" fill="#ccc"/>
<g fill="none" stroke="#8a8a8a" stroke-width="1.500"><circle cx="1403" cy="515" r="4"/><circle cx="1409" cy="537" r="4"/></g>
<g fill="#bbb"><circle cx="1404" cy="565" r="3"/><rect x="1394" y="558" width="3" height="3"/><rect x="1411" y="558" width="3" height="3"/><rect x="1394" y="571" width="3" height="3"/><rect x="1411" y="571" width="3" height="3"/></g>
<circle cx="1408" cy="604" r="7" fill="#999"/><circle cx="1398" cy="610" r="5" fill="#ccc"/>
<ellipse cx="1407" cy="645" rx="9" ry="5" fill="#888"/><path d="M1396 648 L1390 654 H1418" stroke="#bbb" fill="none"/>
<circle cx="1402" cy="685" r="6" fill="#aaa"/><path d="M1406 690 C1418 686 1418 698 1408 698" stroke="#ccc" stroke-width="2" fill="none"/>
<g stroke="#777" fill="none"><path d="M1393 727 H1416 V746 H1393Z M1393 733 H1416 M1393 740 H1416 M1400 727 V746 M1408 727 V746"/></g>
<circle cx="1402" cy="775" r="7" fill="#777"/><rect x="1404" y="767" width="13" height="10" fill="#4a4a4a"/>
<g fill="#aaa"><circle cx="1395" cy="892" r="1.500"/><circle cx="1411" cy="892" r="1.500"/><circle cx="1395" cy="900" r="1.500"/><circle cx="1411" cy="900" r="1.500"/></g>
</svg>
</div>

<!-- video player overlay -->
<span class="x" style="left:7px;top:10px;font-size:15px;color:#e8e8e8;text-shadow:0 0 2px #000">快退</span>
<span class="x" style="left:58px;top:10px;font-size:16.500px;color:#dfe8f0;text-shadow:0 0 2px #000">00:00:19 (9%)</span>

<!-- logo -->
<div style="position:absolute;left:47px;top:782px;width:87px;height:86px;background:#b80000"></div>
<svg width="87" height="86" viewBox="0 0 87 86" style="position:absolute;left:47px;top:782px">
<path d="M12 20 L19 13 L35 21 L36 58 L57 46 L60 11 L75 20 L75 61 L63 75 L49 63 L27 75 L12 68Z" fill="#fff"/>
<path d="M12 20 L26 28 L27 75" stroke="#b80000" stroke-width="1.500" fill="none"/>
<path d="M66 13 L67 56 L75 61" stroke="#b80000" stroke-width="1.500" fill="none"/>
</svg>
<span class="x" style="left:143px;top:783px;font-size:31px;letter-spacing:8.400px">王氏教育集团</span>
<span class="x" style="left:403px;top:791px;font-size:23px;letter-spacing:1.800px">以人为本</span>
<div style="position:absolute;left:144px;top:828px;width:356px;height:4px;background:#fff"></div>
<span class="x" style="left:143px;top:847px;font-size:22px;letter-spacing:26px">始创于二零零二年</span>

<!-- right overlay -->
<span class="x" style="left:1229px;top:781px;font-size:22px;letter-spacing:16.500px">获得更多免费精品教程</span>
<div style="position:absolute;left:1229px;top:809px;width:369px;height:31px;background:rgba(205,205,205,.82)"></div>
<span class="x" style="left:1360px;top:814px;font-size:23px;font-weight:bold;color:#b80000;letter-spacing:15px">绘学霸</span>
<span class="x" style="left:1229px;top:846px;font-size:23px">在</span>
<span class="x" style="left:1255px;top:844px;font-size:27px;letter-spacing:1.800px;font-family:'DejaVu Sans',sans-serif;transform-origin:left;transform:scaleX(.98);-webkit-text-stroke:.4px #fff">AppStore</span>
<span class="x" style="left:1391px;top:846px;font-size:23px">或</span>
<span class="x" style="left:1416px;top:846px;font-size:24px;font-weight:bold;letter-spacing:1px">应用宝</span>
<span class="x" style="left:1496px;top:846px;font-size:23px;letter-spacing:3px">搜索下载</span>
</body></html>
